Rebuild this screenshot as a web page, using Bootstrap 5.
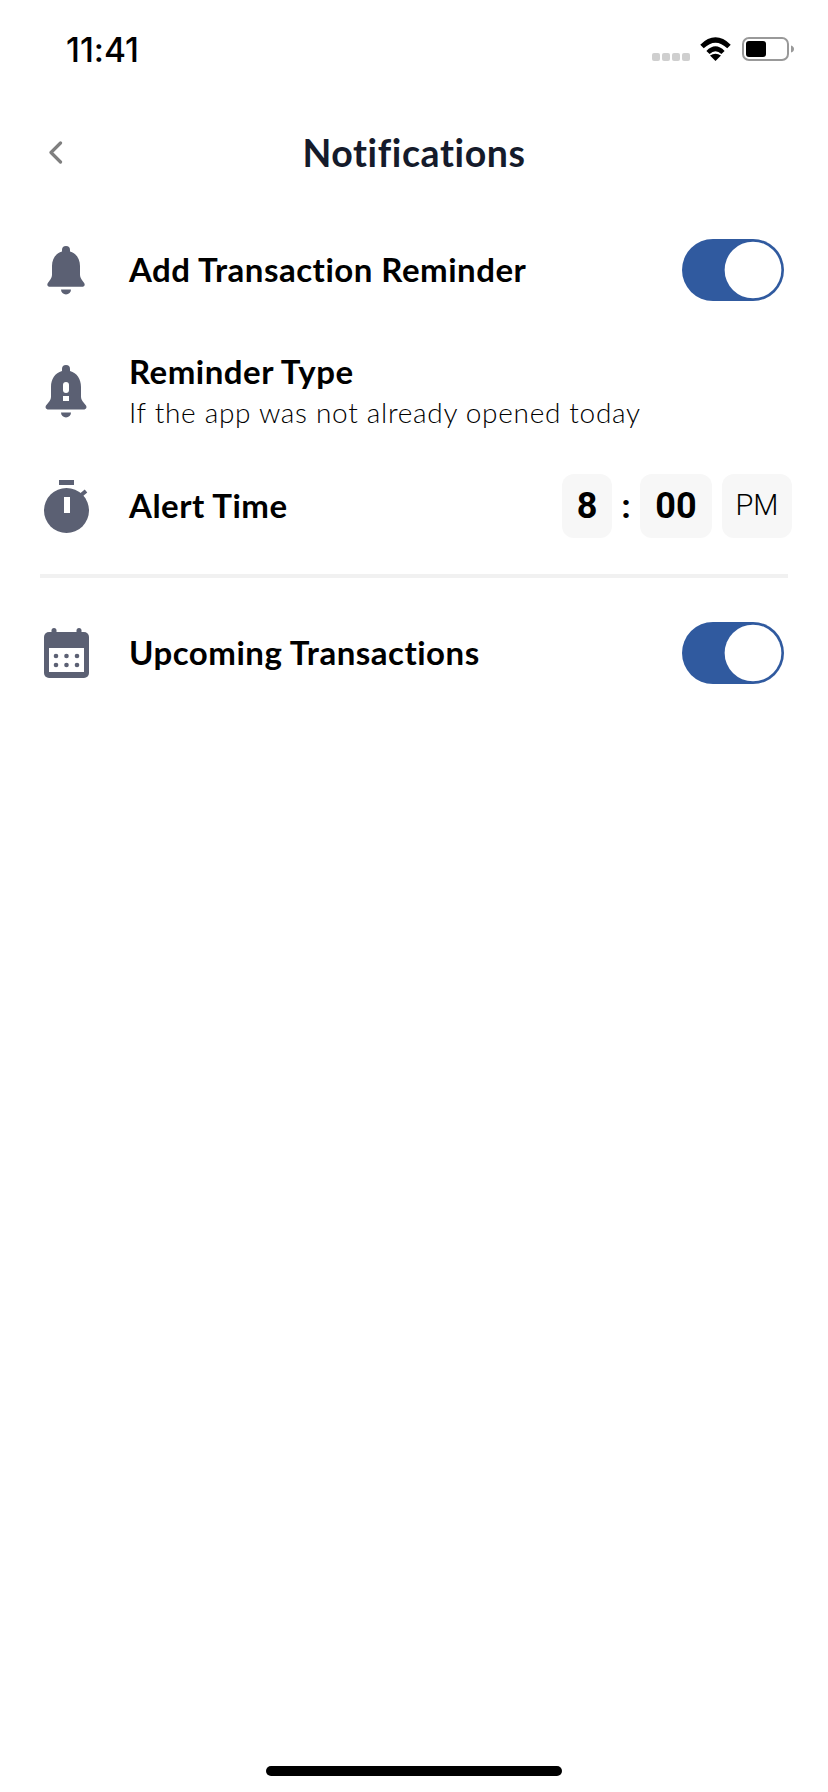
<!DOCTYPE html>
<html lang="en">
<head>
    <meta charset="UTF-8">
    <meta name="viewport" content="width=device-width, initial-scale=1.0">
    <title>Notifications</title>
    <link href="https://cdn.jsdelivr.net/npm/bootstrap@5.3.0/dist/css/bootstrap.min.css" rel="stylesheet">
    <style>
        body {
            background-color: #fff;
            color: #000;
            font-family: Lato, "Open Sans", sans-serif;
            font-variant-ligatures: none;
        }
        .screen {
            height: 1792px;
        }
        .status-bar {
            height: 98px;
            padding: 0 34px 0 66px;
        }
        .status-time {
            font-family: Inter, Roboto, sans-serif;
            font-size: 33.500px;
            font-weight: 500;
            padding-top: 2px;
        }
        .signal-dot {
            width: 8px;
            height: 8px;
            border-radius: 2px;
            background-color: #cfcfcf;
        }
        .signal-dots {
            gap: 2px;
            margin-top: 15px;
            margin-right: 10px;
        }
        .wifi-icon {
            margin-right: 11px;
        }
        .top-bar {
            height: 110px;
            padding-left: 48px;
        }
        .top-bar-back {
            width: 15px;
            height: 23px;
            margin-bottom: 2px;
        }
        .top-bar-title {
            font-size: 37.500px;
            font-weight: 700;
            letter-spacing: .6px;
            color: #151b2b;
            margin: 0 0 2px;
            /* offset of the chevron, keeps the title centred on the page */
            padding-right: 63px;
        }
        .setting-row {
            padding: 0 36px 0 40px;
        }
        .row-a { height: 124px; }
        .row-b { height: 118px; }
        .row-c { height: 112px; }
        .row-d { height: 150px; }
        .setting-icon {
            width: 52px;
            margin-right: 37px;
        }
        .setting-title {
            font-size: 33px;
            font-weight: 700;
            letter-spacing: .5px;
            line-height: 40px;
            padding-bottom: 2px;
        }
        .setting-sub {
            font-size: 28px;
            font-weight: 300;
            letter-spacing: .7px;
            line-height: 38px;
        }
        .form-switch .toggle-input {
            width: 102px;
            height: 62px;
            margin: 0 8px 0 0;
            float: none;
            border: 0;
            border-radius: 31px;
            background-color: #305a9f;
            background-size: contain;
            background-position: right center;
            background-image: url("data:image/svg+xml,%3csvg xmlns='http://www.w3.org/2000/svg' viewBox='-4 -4 8 8'%3e%3ccircle r='3.66' fill='%23fff'/%3e%3c/svg%3e");
        }
        .toggle-wrap {
            padding: 0;
            margin: 0;
            min-height: 0;
        }
        .time-box {
            height: 64px;
            border-radius: 12px;
            background-color: #f7f7f7;
        }
        .time-hour { width: 50px; }
        .time-min { width: 72px; margin-right: 10px; }
        .time-ampm { width: 70px; font-family: Roboto, sans-serif; font-size: 29px; font-weight: 300; }
        .time-digit {
            font-family: Roboto, sans-serif;
            font-size: 36px;
            font-weight: 700;
        }
        .time-colon {
            width: 28px;
            font-family: Roboto, sans-serif;
            font-size: 34px;
            font-weight: 700;
        }
        .rule {
            height: 4px;
            margin: 12px 40px 0;
            background-color: #f1f1f1;
        }
        .home-bar {
            width: 296px;
            height: 10px;
            border-radius: 5px;
            background-color: #000;
            margin-bottom: 16px;
        }
    </style>
</head>
<body>
    <div class="screen d-flex flex-column">
        <!-- Status bar -->
        <div class="status-bar d-flex align-items-center justify-content-between">
            <span class="status-time">11:41</span>
            <div class="d-flex align-items-center">
                <div class="signal-dots d-flex">
                    <span class="signal-dot"></span>
                    <span class="signal-dot"></span>
                    <span class="signal-dot"></span>
                    <span class="signal-dot"></span>
                </div>
                <svg width="31" height="24" viewBox="0 0 31 24" class="wifi-icon" aria-hidden="true">
                    <path d="M2 9.500Q15.500-3.500 29 9.500" fill="none" stroke="#000" stroke-width="5"/>
                    <path d="M8 15.500Q15.500 8 23 15.500" fill="none" stroke="#000" stroke-width="4.500"/>
                    <path d="M15.500 24L10 18.500Q15.500 15 21 18.500Z" fill="#000"/>
                </svg>
                <svg width="52" height="24" viewBox="0 0 52 24" aria-hidden="true">
                    <rect x="1" y="1" width="45" height="22" rx="6" fill="none" stroke="#999" stroke-width="2"/>
                    <rect x="4" y="4" width="20" height="16" rx="3" fill="#000"/>
                    <path d="M49 8.500q3 1 3 3.500t-3 3.500z" fill="#999"/>
                </svg>
            </div>
        </div>

        <!-- Header -->
        <div class="top-bar d-flex align-items-center">
            <svg class="top-bar-back" viewBox="0 0 15 23" aria-hidden="true">
                <path d="M12.500 2L3 11.500l9.500 9.500" fill="none" stroke="#7f7f7f" stroke-width="3.200" stroke-linecap="round" stroke-linejoin="round"/>
            </svg>
            <h1 class="top-bar-title flex-grow-1 text-center">Notifications</h1>
        </div>

        <!-- Settings -->
        <div class="setting-row row-a d-flex align-items-center">
            <div class="setting-icon d-flex justify-content-center">
                <svg width="38" height="49" viewBox="0 0 38 49" aria-hidden="true">
                    <path fill="#5b6073" d="M19 0a4 4 0 0 1 4 4v1.500C29.500 7.500 33 13 33 20v9c0 3 2 5 4.300 8.300q1.200 2.700-1.300 3.400H2q-2.500-.7-1.300-3.400C3 34 5 32 5 29v-9C5 13 8.500 7.500 15 5.500V4a4 4 0 0 1 4-4zM14 43.500h10a5 5 0 0 1-10 0z"/>
                </svg>
            </div>
            <div class="setting-title flex-grow-1">Add Transaction Reminder</div>
            <div class="form-check form-switch toggle-wrap d-flex">
                <input class="form-check-input toggle-input" type="checkbox" role="switch" checked aria-label="Add Transaction Reminder">
            </div>
        </div>

        <div class="setting-row row-b d-flex align-items-center">
            <div class="setting-icon d-flex justify-content-center">
                <svg width="42" height="53" viewBox="0 0 42 53" aria-hidden="true">
                    <path fill="#5b6073" d="M21 0a4 4 0 0 1 4 4v2C32 8 36 14 36 22v10c0 3 2 5 5 8.500q1.500 3-1.500 4H2.500q-3-1-1.500-4C4 37 6 35 6 32V22C6 14 10 8 17 6V4a4 4 0 0 1 4-4zM16 47.500h10a5 5 0 0 1-10 0z"/>
                    <rect x="18" y="17" width="6" height="11" rx="3" fill="#fff"/>
                    <rect x="18" y="31" width="6" height="5" fill="#fff"/>
                </svg>
            </div>
            <div class="flex-grow-1">
                <div class="setting-title">Reminder Type</div>
                <div class="setting-sub">If the app was not already opened today</div>
            </div>
        </div>

        <div class="setting-row row-c d-flex align-items-center">
            <div class="setting-icon d-flex justify-content-center">
                <svg width="45" height="53" viewBox="0 0 45 53" aria-hidden="true">
                    <rect x="15" y="0" width="15" height="5" fill="#5b6073"/>
                    <circle cx="22.500" cy="30.500" r="22.500" fill="#5b6073"/>
                    <path d="M36 16l6-5" stroke="#5b6073" stroke-width="4"/>
                    <rect x="20" y="17" width="6" height="16" fill="#fff"/>
                </svg>
            </div>
            <div class="setting-title flex-grow-1">Alert Time</div>
            <div class="d-flex align-items-center">
                <div class="time-box time-hour time-digit d-flex align-items-center justify-content-center">8</div>
                <div class="time-colon text-center">:</div>
                <div class="time-box time-min time-digit d-flex align-items-center justify-content-center">00</div>
                <div class="time-box time-ampm d-flex align-items-center justify-content-center">PM</div>
            </div>
        </div>

        <div class="rule"></div>

        <div class="setting-row row-d d-flex align-items-center">
            <div class="setting-icon d-flex justify-content-center">
                <svg width="45" height="50" viewBox="0 0 45 50" aria-hidden="true">
                    <rect x="0" y="4" width="45" height="46" rx="5" fill="#5b6073"/>
                    <rect x="7.500" y="0" width="5" height="8" rx="2.500" fill="#5b6073"/>
                    <rect x="32.500" y="0" width="5" height="8" rx="2.500" fill="#5b6073"/>
                    <rect x="5" y="20" width="35" height="24" fill="#fff"/>
                    <g fill="#5b6073">
                        <circle cx="12" cy="28" r="2.300"/><circle cx="22.500" cy="28" r="2.300"/><circle cx="33" cy="28" r="2.300"/>
                        <circle cx="12" cy="37" r="2.300"/><circle cx="22.500" cy="37" r="2.300"/><circle cx="33" cy="37" r="2.300"/>
                    </g>
                </svg>
            </div>
            <div class="setting-title flex-grow-1">Upcoming Transactions</div>
            <div class="form-check form-switch toggle-wrap d-flex">
                <input class="form-check-input toggle-input" type="checkbox" role="switch" checked aria-label="Upcoming Transactions">
            </div>
        </div>

        <div class="home-bar mx-auto mt-auto"></div>
    </div>

    <script src="https://cdn.jsdelivr.net/npm/bootstrap@5.3.0/dist/js/bootstrap.bundle.min.js"></script>
</body>
</html>
